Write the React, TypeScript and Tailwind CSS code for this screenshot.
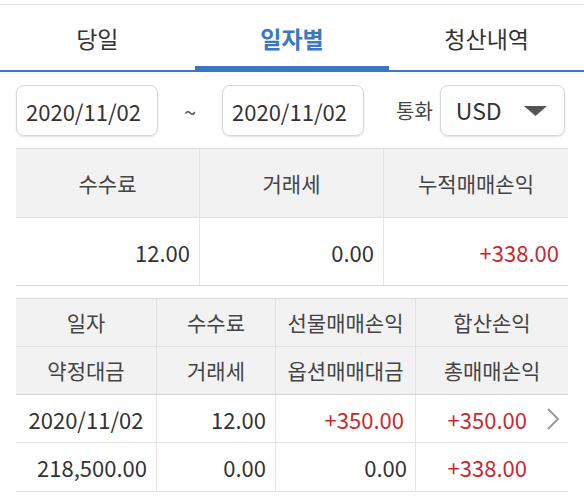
import React from 'react';

const tabs = ['당일', '일자별', '청산내역'];

const Chevron = () => (
  <svg width="14" height="24" viewBox="0 0 14 24" fill="none">
    <polyline points="2,2 12,12 2,22" stroke="#9a9a9a" strokeWidth="2" fill="none" />
  </svg>
);

const DateBox = ({ value }: { value: string }) => (
  <div className="shrink-0 w-[142px] h-[51px] rounded-[8px] border border-[#d6d6d6] shadow-[0_1px_2px_rgba(0,0,0,0.12)] flex items-center pl-[9px] text-[22px] text-[#333] leading-none whitespace-nowrap">
    {value}
  </div>
);

const HeadCell = ({ children, last }: { children: React.ReactNode; last?: boolean }) => (
  <div className={`flex items-center justify-center text-[21px] text-[#444] leading-none whitespace-nowrap ${last ? '' : 'border-r border-[#e2e2e2]'}`}>
    {children}
  </div>
);

const NumCell = ({ children, red, last, center, pr = 'pr-[9px]' }: { children: React.ReactNode; red?: boolean; last?: boolean; center?: boolean; pr?: string }) => (
  <div className={`flex items-center ${center ? 'justify-center' : `justify-end ${pr}`} text-[22px] leading-none whitespace-nowrap ${red ? 'text-[#c62a2f]' : 'text-[#333]'} ${last ? '' : 'border-r border-[#e6e6e6]'}`}>
    {children}
  </div>
);

export default function App() {
  return (
    <div className="w-[584px] h-[501px] bg-white overflow-hidden font-['Noto_Sans_CJK_KR','Noto_Sans',sans-serif]">
      <div className="h-[4px]" />
      <div className="border-t border-[#e6e6e6]" />

      {/* 탭 */}
      <div className="flex h-[67px] border-b-2 border-[#3b78c3]">
        {tabs.map((t, i) => (
          <div key={t} className="relative flex-1 flex items-center justify-center pt-[1px]">
            <span className={`text-[23px] leading-none ${i === 1 ? 'text-[#3b78c3] font-bold' : 'text-[#333]'}`}>{t}</span>
            {i === 1 && <div className="absolute left-0 right-0 bottom-[-2px] h-[6px] bg-[#3b78c3]" />}
          </div>
        ))}
      </div>

      {/* 조회 조건 */}
      <div className="flex items-center px-4 pt-[13px] pb-[12px]">
        <DateBox value="2020/11/02" />
        <div className="shrink-0 w-[64px] text-center text-[22px] text-[#555] leading-none">~</div>
        <DateBox value="2020/11/02" />
        <div className="shrink-0 ml-[32px] text-[20px] text-[#444] leading-none whitespace-nowrap">통화</div>
        <div className="shrink-0 ml-[7px] w-[125px] h-[51px] rounded-[8px] border border-[#d6d6d6] shadow-[0_1px_2px_rgba(0,0,0,0.12)] flex items-center justify-between pl-[15px] pr-[17px]">
          <span className="text-[23px] text-[#333] leading-none">USD</span>
          <svg width="23" height="10" viewBox="0 0 23 10">
            <polygon points="0,0 23,0 11.5,10" fill="#555" />
          </svg>
        </div>
      </div>

      {/* 합계 */}
      <div className="mx-4 border-t border-[#dcdcdc]">
        <div className="grid grid-cols-3 h-[68px] bg-[#f2f2f2]">
          <HeadCell>수수료</HeadCell>
          <HeadCell>거래세</HeadCell>
          <HeadCell last>누적매매손익</HeadCell>
        </div>
        <div className="grid grid-cols-3 h-[69px] border-t border-[#e2e2e2] border-b border-b-[#d6d6d6]">
          <NumCell>12.00</NumCell>
          <NumCell>0.00</NumCell>
          <NumCell red last>+338.00</NumCell>
        </div>
      </div>

      {/* 일자별 내역 */}
      <div className="mx-4 mt-[12px] border-t border-[#dcdcdc]">
        <div className="grid grid-cols-[141px_119px_140px_152px] h-[47px] bg-[#f2f2f2]">
          <HeadCell>일자</HeadCell>
          <HeadCell>수수료</HeadCell>
          <HeadCell>선물매매손익</HeadCell>
          <HeadCell last>합산손익</HeadCell>
        </div>
        <div className="grid grid-cols-[141px_119px_140px_152px] h-[49px] bg-[#f2f2f2] border-t border-[#e2e2e2] border-b border-b-[#d2d2d2]">
          <HeadCell>약정대금</HeadCell>
          <HeadCell>거래세</HeadCell>
          <HeadCell>옵션매매대금</HeadCell>
          <HeadCell last>총매매손익</HeadCell>
        </div>
        <div className="relative grid grid-cols-[141px_119px_140px_152px] h-[48px] border-b border-[#e4e4e4]">
          <NumCell center>2020/11/02</NumCell>
          <NumCell>12.00</NumCell>
          <NumCell red pr="pr-[11px]">+350.00</NumCell>
          <NumCell red last pr="pr-[41px]">+350.00</NumCell>
          <div className="absolute right-[8px] top-[12px]">
            <Chevron />
          </div>
        </div>
        <div className="grid grid-cols-[141px_119px_140px_152px] h-[49px] border-b border-[#e4e4e4]">
          <NumCell>218,500.00</NumCell>
          <NumCell>0.00</NumCell>
          <NumCell pr="pr-[8px]">0.00</NumCell>
          <NumCell red last pr="pr-[41px]">+338.00</NumCell>
        </div>
      </div>
    </div>
  );
}
